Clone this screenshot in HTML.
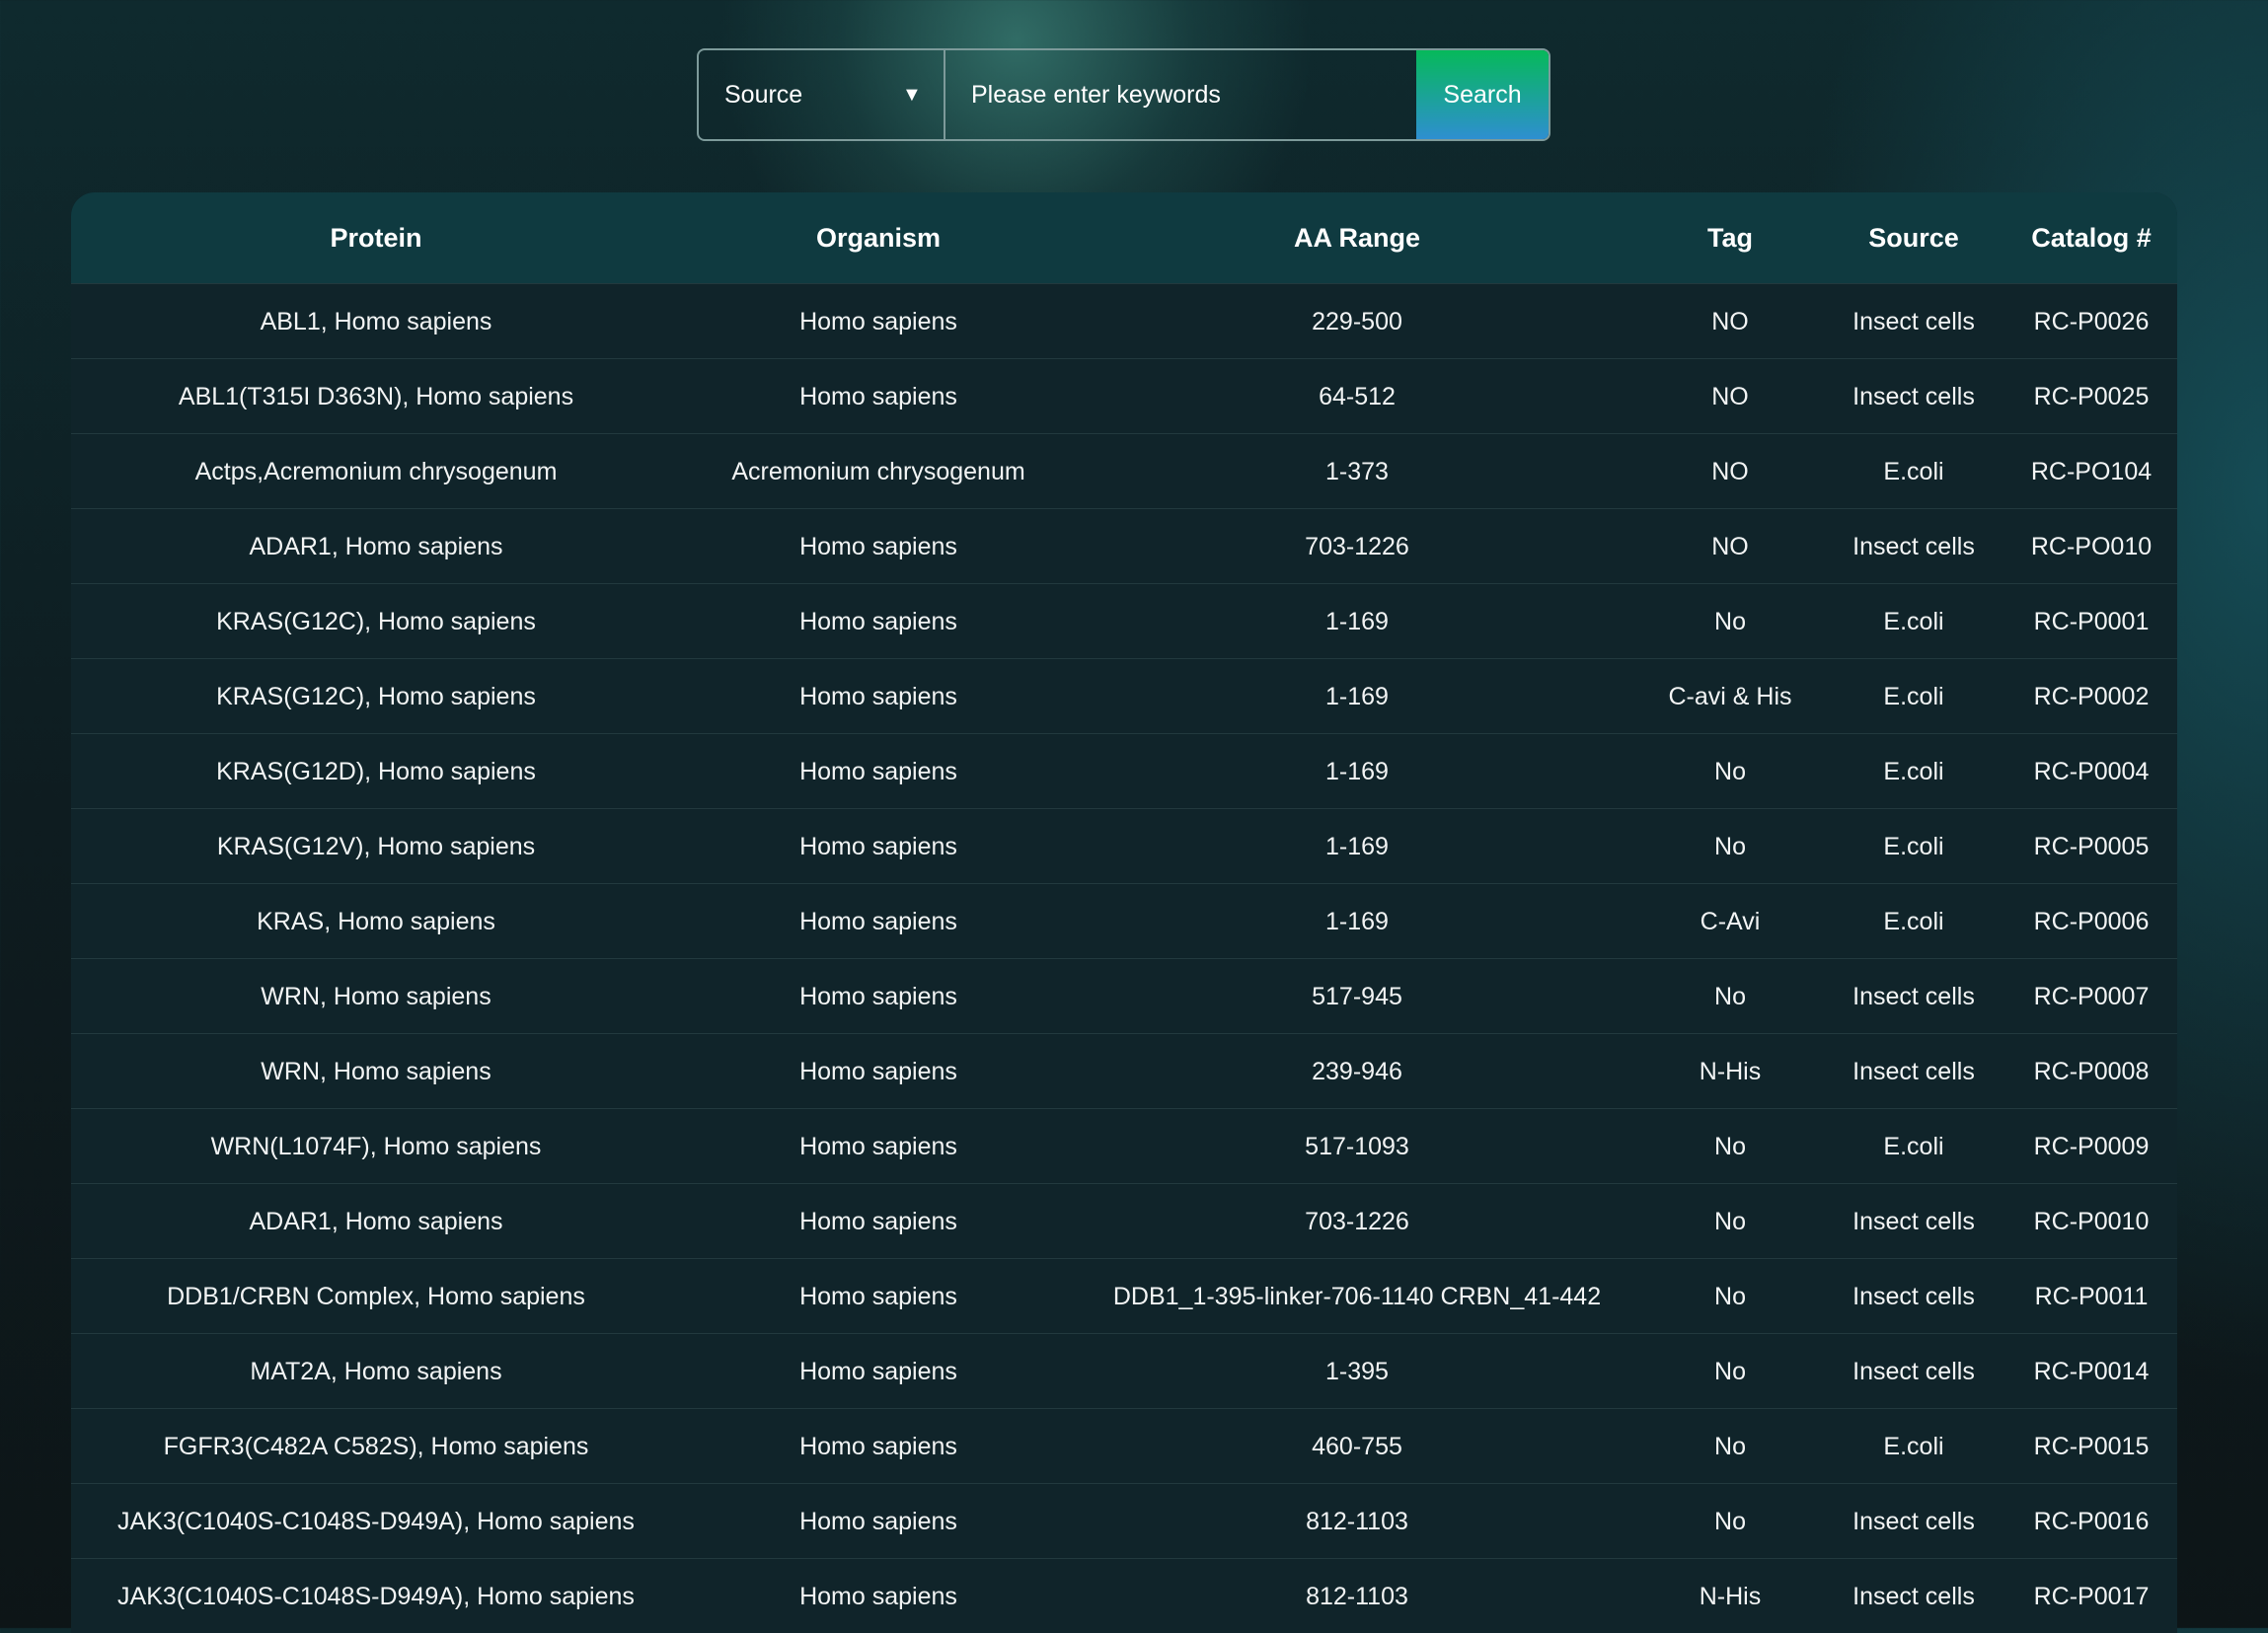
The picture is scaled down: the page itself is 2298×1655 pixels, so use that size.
<!DOCTYPE html>
<html><head><meta charset="utf-8"><style>
html,body{margin:0;padding:0}
body{width:2298px;height:1650px;overflow:hidden;position:relative;font-family:"Liberation Sans",sans-serif;color:#fff;
background:
radial-gradient(ellipse 300px 300px at 1030px 40px,rgba(60,130,120,.75),rgba(40,100,95,.3) 60%,rgba(0,0,0,0) 100%),
radial-gradient(ellipse 500px 900px at 2298px 500px,rgba(22,80,90,.9),rgba(0,0,0,0) 100%),
linear-gradient(180deg,#0f2a2e 0%,#0e1c20 50%,#0d1517 100%);}
.search{position:absolute;left:706px;top:49px;width:865px;height:94px;border:2px solid #7d9a9a;border-radius:8px;box-sizing:border-box;overflow:hidden}
.src{position:absolute;left:0;top:0;width:250px;height:100%;border-right:2px solid #7d9a9a;font-size:25px;line-height:90px;padding-left:26px;box-sizing:border-box}
.src span{position:absolute;left:206px;top:0;font-size:20px}
.kw{position:absolute;left:276px;top:0;font-size:25px;line-height:90px}
.btn{position:absolute;right:0;top:0;width:134px;height:100%;background:linear-gradient(180deg,#06b95a,#2e8fd0);font-size:25px;line-height:90px;text-align:center}
.tbl{position:absolute;left:72px;top:195px;width:2134px;height:1460px;border-radius:24px 24px 0 0;overflow:hidden;background:#10242a}
table{border-collapse:collapse;width:2134px;table-layout:fixed}
th{height:92px;background:#0f3a40;font-size:27px;font-weight:bold;text-align:center;padding:0}
td{height:73px;border-top:1px solid #22393e;font-size:25px;text-align:center;padding:2px 0 0 0;white-space:nowrap;color:#f2f4f4;vertical-align:middle;box-sizing:content-box}
</style></head><body>
<div class="search"><div class="src">Source<span>▼</span></div><div class="kw">Please enter keywords</div><div class="btn">Search</div></div>
<div class="tbl"><table>
<colgroup><col style="width:618px"><col style="width:400px"><col style="width:570px"><col style="width:186px"><col style="width:186px"><col style="width:174px"></colgroup>
<tr><th>Protein</th><th>Organism</th><th>AA Range</th><th>Tag</th><th>Source</th><th>Catalog #</th></tr>
<tr><td>ABL1, Homo sapiens</td><td>Homo sapiens</td><td>229-500</td><td>NO</td><td>Insect cells</td><td>RC-P0026</td></tr>
<tr><td>ABL1(T315I D363N), Homo sapiens</td><td>Homo sapiens</td><td>64-512</td><td>NO</td><td>Insect cells</td><td>RC-P0025</td></tr>
<tr><td>Actps,Acremonium chrysogenum</td><td>Acremonium chrysogenum</td><td>1-373</td><td>NO</td><td>E.coli</td><td>RC-PO104</td></tr>
<tr><td>ADAR1, Homo sapiens</td><td>Homo sapiens</td><td>703-1226</td><td>NO</td><td>Insect cells</td><td>RC-PO010</td></tr>
<tr><td>KRAS(G12C), Homo sapiens</td><td>Homo sapiens</td><td>1-169</td><td>No</td><td>E.coli</td><td>RC-P0001</td></tr>
<tr><td>KRAS(G12C), Homo sapiens</td><td>Homo sapiens</td><td>1-169</td><td>C-avi &amp; His</td><td>E.coli</td><td>RC-P0002</td></tr>
<tr><td>KRAS(G12D), Homo sapiens</td><td>Homo sapiens</td><td>1-169</td><td>No</td><td>E.coli</td><td>RC-P0004</td></tr>
<tr><td>KRAS(G12V), Homo sapiens</td><td>Homo sapiens</td><td>1-169</td><td>No</td><td>E.coli</td><td>RC-P0005</td></tr>
<tr><td>KRAS, Homo sapiens</td><td>Homo sapiens</td><td>1-169</td><td>C-Avi</td><td>E.coli</td><td>RC-P0006</td></tr>
<tr><td>WRN, Homo sapiens</td><td>Homo sapiens</td><td>517-945</td><td>No</td><td>Insect cells</td><td>RC-P0007</td></tr>
<tr><td>WRN, Homo sapiens</td><td>Homo sapiens</td><td>239-946</td><td>N-His</td><td>Insect cells</td><td>RC-P0008</td></tr>
<tr><td>WRN(L1074F), Homo sapiens</td><td>Homo sapiens</td><td>517-1093</td><td>No</td><td>E.coli</td><td>RC-P0009</td></tr>
<tr><td>ADAR1, Homo sapiens</td><td>Homo sapiens</td><td>703-1226</td><td>No</td><td>Insect cells</td><td>RC-P0010</td></tr>
<tr><td>DDB1/CRBN Complex, Homo sapiens</td><td>Homo sapiens</td><td>DDB1_1-395-linker-706-1140 CRBN_41-442</td><td>No</td><td>Insect cells</td><td>RC-P0011</td></tr>
<tr><td>MAT2A, Homo sapiens</td><td>Homo sapiens</td><td>1-395</td><td>No</td><td>Insect cells</td><td>RC-P0014</td></tr>
<tr><td>FGFR3(C482A C582S), Homo sapiens</td><td>Homo sapiens</td><td>460-755</td><td>No</td><td>E.coli</td><td>RC-P0015</td></tr>
<tr><td>JAK3(C1040S-C1048S-D949A), Homo sapiens</td><td>Homo sapiens</td><td>812-1103</td><td>No</td><td>Insect cells</td><td>RC-P0016</td></tr>
<tr><td>JAK3(C1040S-C1048S-D949A), Homo sapiens</td><td>Homo sapiens</td><td>812-1103</td><td>N-His</td><td>Insect cells</td><td>RC-P0017</td></tr>
</table></div>
</body></html>
